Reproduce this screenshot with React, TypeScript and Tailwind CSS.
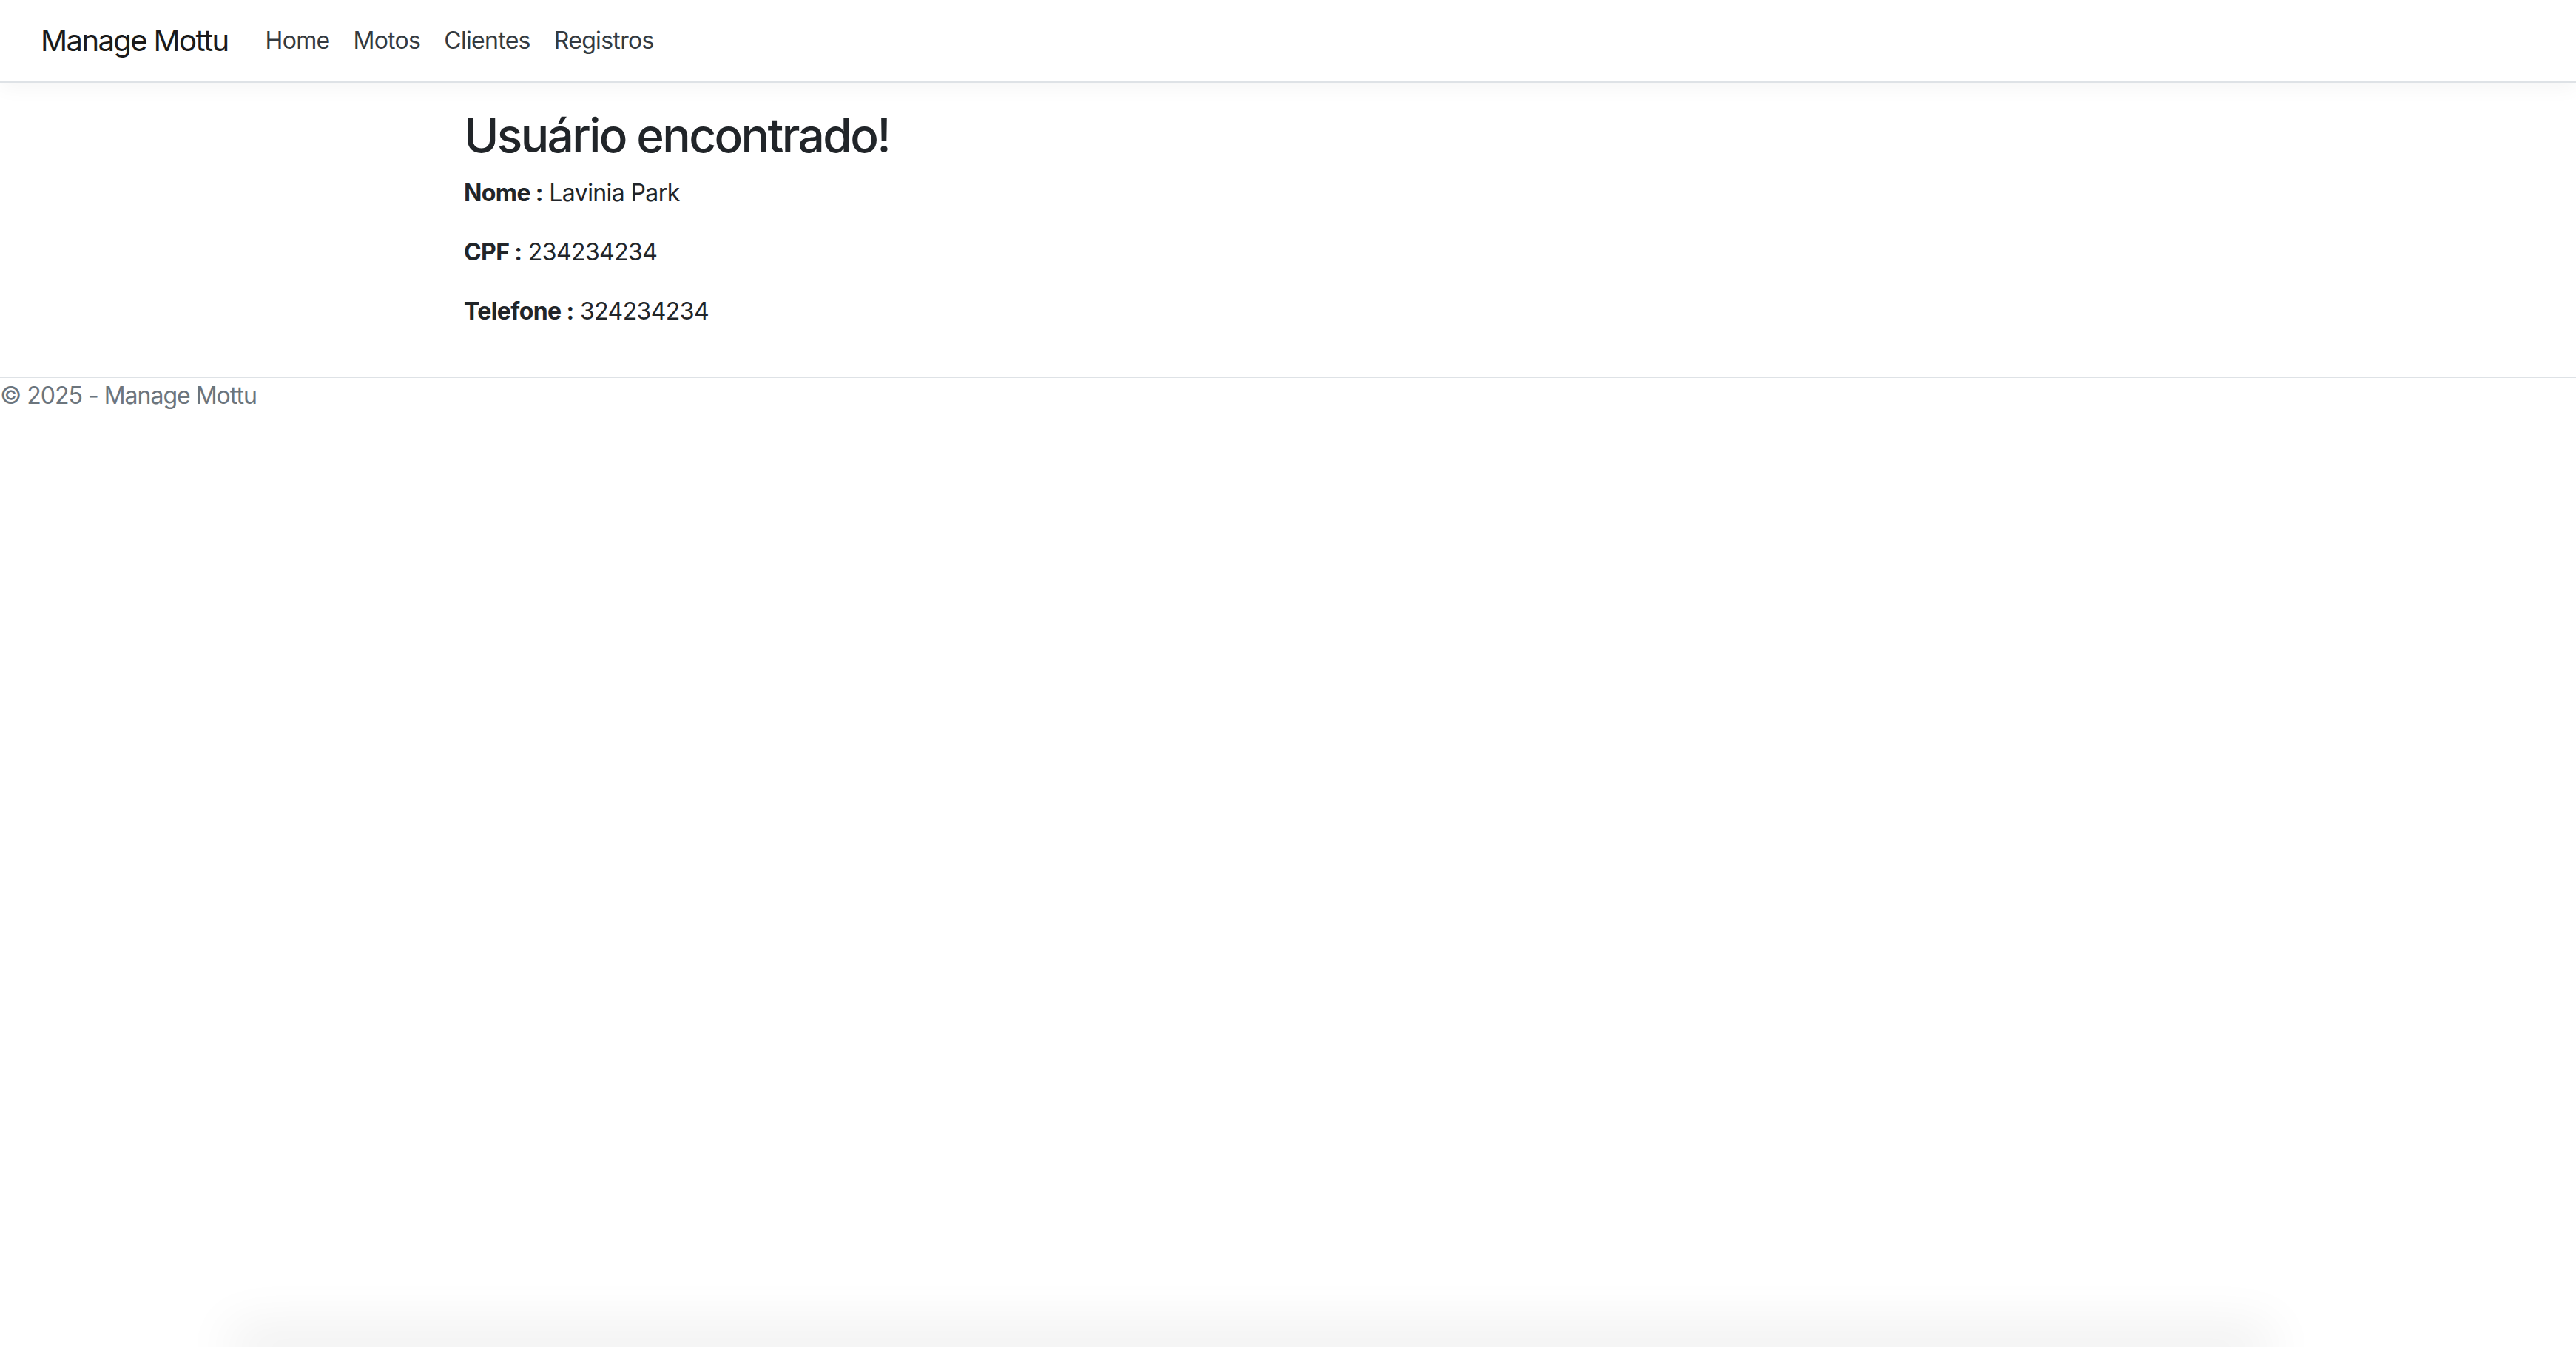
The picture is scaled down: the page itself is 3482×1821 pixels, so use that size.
export default function App() {
    const links = ['Home', 'Motos', 'Clientes', 'Registros'];

    return (
        <div className="min-h-screen flex flex-col bg-white overflow-hidden font-['Inter','Liberation_Sans',sans-serif] text-[#212529]">
            <header>
                <nav className="h-[112px] flex items-center pl-[55px] border-b-2 border-[#dee2e6] shadow-[0_8px_24px_rgba(0,0,0,0.04)] bg-white">
                    <a className="text-[40px] leading-[60px] text-[#1a1a1a] mr-[34px] tracking-[-1.6px]">Manage Mottu</a>
                    <ul className="flex items-center">
                        {links.map((l) => (
                            <li key={l}>
                                <a className="block px-[16px] text-[32px] leading-[48px] text-[#343a40] tracking-[-0.7px]">{l}</a>
                            </li>
                        ))}
                    </ul>
                </nav>
            </header>

            <main className="mt-[32px] pb-[32px] pl-[627px]">
                <h2 className="text-[64px] leading-[77px] font-medium mb-[16px] tracking-[-2.6px]">Usuário encontrado!</h2>
                <p className="text-[32px] leading-[48px] mb-[32px] tracking-[-0.6px]"><strong className="font-bold">Nome :</strong> Lavinia Park</p>
                <p className="text-[32px] leading-[48px] mb-[32px] tracking-[-0.6px]"><strong className="font-bold">CPF :</strong> 234234234</p>
                <p className="text-[32px] leading-[48px] mb-[32px] tracking-[-0.6px]"><strong className="font-bold">Telefone :</strong> 324234234</p>
            </main>

            <footer className="border-t-2 border-[#dee2e6] text-[#6c757d] text-[32px] leading-[48px] tracking-[-1px]">
                © 2025 - Manage Mottu
            </footer>

            <div className="flex-1" />
            <div className="h-0 ml-[340px] mr-[440px] shadow-[0_0_70px_28px_rgba(0,0,0,0.07)]" />
        </div>
    );
}
